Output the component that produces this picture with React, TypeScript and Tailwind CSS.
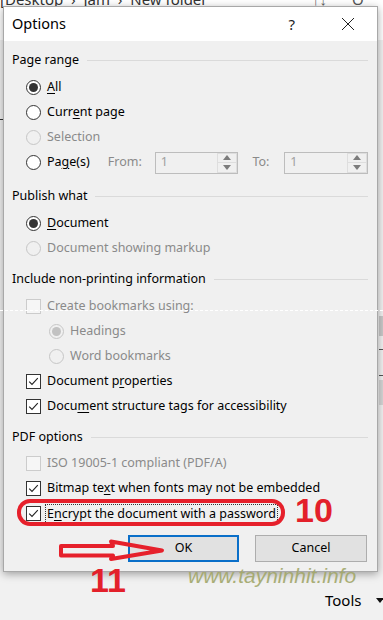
import React from "react";

const FONT = { fontFamily: '"Noto Sans", "Open Sans", sans-serif' };

function Radio({ checked, disabled }: { checked?: boolean; disabled?: boolean }) {
  return (
    <span
      className={`w-[15px] h-[15px] shrink-0 rounded-full border flex items-center justify-center ${
        disabled ? "border-[#c6c6c6] bg-[#f0f0f0]" : "border-[#333333] bg-white"
      }`}
    >
      {checked && (
        <span className={`w-[9px] h-[9px] rounded-full ${disabled ? "bg-[#c2c2c2]" : "bg-[#333333]"}`} />
      )}
    </span>
  );
}

function Check({ checked, disabled }: { checked?: boolean; disabled?: boolean }) {
  return (
    <span
      className={`w-[15px] h-[15px] shrink-0 border flex items-center justify-center ${
        disabled ? "border-[#cccccc] bg-[#f6f6f6]" : "border-[#333333] bg-white"
      }`}
    >
      {checked && (
        <svg width="11" height="11" viewBox="0 0 11 11">
          <polyline points="1.2,5.6 4,8.4 9.8,2.2" fill="none" stroke="#222" strokeWidth="1.1" />
        </svg>
      )}
    </span>
  );
}

function Header({ children }: { children: React.ReactNode }) {
  return (
    <div className="h-[20px] flex items-center gap-[8px] text-[12.5px] text-black">
      <span className="whitespace-nowrap">{children}</span>
      <div className="flex-1 h-px bg-[#dadada]" />
    </div>
  );
}

function Row({
  indent = 14,
  children,
}: {
  indent?: number;
  children: React.ReactNode;
}) {
  return (
    <div
      className={`h-[25px] flex items-center gap-[6px] text-[12.5px] whitespace-nowrap ${
        indent === 14 ? "pl-[14px]" : "pl-[37px]"
      }`}
    >
      {children}
    </div>
  );
}

function U({ children }: { children: React.ReactNode }) {
  return <span className="underline underline-offset-[2px] decoration-[1px]">{children}</span>;
}

function Spin() {
  return (
    <div className="flex items-center h-[22px] w-[84px] border border-[#bdbdbd] bg-[#f0f0f0]">
      <span className="flex-1 pl-[5px] text-[12.5px] text-[#a0a0a0]">1</span>
      <div className="w-[20px] h-[20px] flex flex-col">
        <div className="flex-1 border border-[#dedede] flex items-center justify-center">
          <svg width="8" height="5" viewBox="0 0 8 5">
            <polygon points="0,5 8,5 4,0" fill="#7c7c7c" />
          </svg>
        </div>
        <div className="flex-1 border border-t-0 border-[#dedede] flex items-center justify-center">
          <svg width="8" height="5" viewBox="0 0 8 5">
            <polygon points="0,0 8,0 4,5" fill="#7c7c7c" />
          </svg>
        </div>
      </div>
    </div>
  );
}

export default function App() {
  return (
    <div className="relative w-[383px] h-[620px] overflow-hidden bg-[#f1f1f1]" style={FONT}>
      {/* background explorer strip */}
      <div className="absolute left-0 top-0 w-[383px] h-[40px] bg-white" />
      <div className="absolute left-[0px] top-[-12px] text-[15px] text-[#333] whitespace-nowrap">
        [Desktop &nbsp;›&nbsp; Jam &nbsp;›&nbsp; New folder
      </div>
      <div className="absolute left-[312px] top-[-12px] text-[15px] text-[#666]">↑↓</div>
      <div className="absolute left-[352px] top-[-12px] text-[15px] text-[#555]">O</div>
      <div className="absolute left-[379px] top-[316px] w-[4px] h-[20px] bg-[#c9c9c9]" />
      <div className="absolute left-[379px] top-[349px] w-[4px] h-px bg-[#555]" />
      <div className="absolute left-[379px] top-[375px] w-[4px] h-px bg-[#555]" />
      <div className="absolute left-[379px] top-[380px] w-[4px] h-[25px] bg-[#d6d6d6]" />
      <div className="absolute left-[0px] top-[119px] w-[3px] h-px bg-[#333]" />

      {/* dialog window */}
      <div className="absolute left-[3px] top-[6px] w-[375px] h-[566px] bg-[#f0f0f0] border border-[#a8a8a8] shadow-[0_2px_8px_rgba(0,0,0,0.35)] flex flex-col">
        <div className="h-[34px] bg-white flex items-center pl-[8px] pr-[22px] shrink-0">
          <span className="text-[14.5px] text-black flex-1">Options</span>
          <span className="text-[15px] text-[#222] mr-[46px]">?</span>
          <svg width="14" height="14" viewBox="0 0 14 14">
            <path d="M1 1 L13 13 M13 1 L1 13" stroke="#222" strokeWidth="1" />
          </svg>
        </div>

        <div className="flex flex-col pl-[8px] pr-[9px] pt-[9px]">
          <Header>Page range</Header>
          <div className="mt-[5px]">
            <Row>
              <Radio checked />
              <span>
                <U>A</U>ll
              </span>
            </Row>
            <Row>
              <Radio />
              <span>
                Curr<U>e</U>nt page
              </span>
            </Row>
            <Row>
              <Radio disabled />
              <span className="text-[#8a8a8a]">Selection</span>
            </Row>
            <div className="h-[25px] flex items-center pl-[14px] text-[12.5px] whitespace-nowrap">
              <Radio />
              <span className="ml-[6px] w-[61px]">
                Pa<U>g</U>e(s)
              </span>
              <span className="w-[47px] text-[#8a8a8a]">From:</span>
              <Spin />
              <span className="ml-[14px] w-[32px] text-[#8a8a8a]">To:</span>
              <Spin />
            </div>
          </div>

          <div className="mt-[11px]">
            <Header>Publish what</Header>
          </div>
          <div className="mt-[5px]">
            <Row>
              <Radio checked />
              <span>
                <U>D</U>ocument
              </span>
            </Row>
            <Row>
              <Radio disabled />
              <span className="text-[#8a8a8a]">Document showing markup</span>
            </Row>
          </div>

          <div className="mt-[8px]">
            <Header>Include non-printing information</Header>
          </div>
          <div className="mt-[5px]">
            <Row>
              <Check disabled />
              <span className="text-[#8a8a8a]">Create bookmarks using:</span>
            </Row>
            <Row indent={37}>
              <Radio checked disabled />
              <span className="text-[#8a8a8a]">Headings</span>
            </Row>
            <Row indent={37}>
              <Radio disabled />
              <span className="text-[#8a8a8a]">Word bookmarks</span>
            </Row>
            <Row>
              <Check checked />
              <span>
                Document p<U>r</U>operties
              </span>
            </Row>
            <Row>
              <Check checked />
              <span>
                Docu<U>m</U>ent structure tags for accessibility
              </span>
            </Row>
          </div>

          <div className="mt-[8px]">
            <Header>PDF options</Header>
          </div>
          <div className="mt-[4px]">
            <Row>
              <Check disabled />
              <span className="text-[#8a8a8a]">ISO 19005-1 compliant (PDF/A)</span>
            </Row>
            <Row>
              <Check checked />
              <span>
                Bitmap te<U>x</U>t when fonts may not be embedded
              </span>
            </Row>
            <div className="h-[25px] flex items-center pl-[14px] text-[12.5px] whitespace-nowrap">
              <Check checked />
              <span className="ml-[5px] px-[1px] leading-[18px] outline outline-1 outline-dotted outline-[#333]">
                E<U>n</U>crypt the document with a password
              </span>
            </div>
          </div>

          <div className="mt-[9px] flex justify-end gap-[16px] pr-[1px]">
            <button className="w-[111px] h-[27px] border-2 border-[#0a6fc9] bg-[#e1e1e1] text-[12.5px] text-black">
              OK
            </button>
            <button className="w-[112px] h-[27px] border border-[#adadad] bg-[#e1e1e1] text-[12.5px] text-black">
              Cancel
            </button>
          </div>
        </div>
      </div>

      {/* dashed artifact line */}
      <div className="absolute left-0 top-[310px] w-[383px] border-t border-dashed border-white" />

      {/* annotations */}
      <div className="absolute left-[17px] top-[499px] w-[268px] h-[27px] rounded-[13px] border-[4px] border-[#e6202b]" />
      <div
        className="absolute left-[295px] top-[493px] text-[34px] leading-[34px] font-bold text-[#e3202a]"
        style={{ fontFamily: '"Liberation Sans", Arial, sans-serif' }}
      >
        10
      </div>
      <svg className="absolute left-0 top-0" width="383" height="620" viewBox="0 0 383 620">
        <path
          d="M61 546 L113 546 L111 541.5 L162 550.5 L111 559 L113 555.5 L61 555.5 Z"
          fill="none"
          stroke="#e6202b"
          strokeWidth="4"
          strokeLinejoin="round"
        />
      </svg>
      <div
        className="absolute left-[90px] top-[563px] text-[34px] leading-[34px] font-bold text-[#e3202a]"
        style={{ fontFamily: '"Liberation Sans", Arial, sans-serif' }}
      >
        11
      </div>
      <div
        className="absolute left-[188px] top-[565px] text-[21px] leading-[21px] italic text-[#a2a76a] opacity-90 whitespace-nowrap"
        style={{ fontFamily: '"Liberation Sans", Arial, sans-serif' }}
      >
        www.tayninhit.info
      </div>
      <div className="absolute left-[325px] top-[589px] text-[15px] leading-[22px] text-black">Tools</div>
      <svg className="absolute left-[376px] top-[598px]" width="8" height="5" viewBox="0 0 8 5">
        <polygon points="0,0 8,0 4,5" fill="#111" />
      </svg>
    </div>
  );
}
